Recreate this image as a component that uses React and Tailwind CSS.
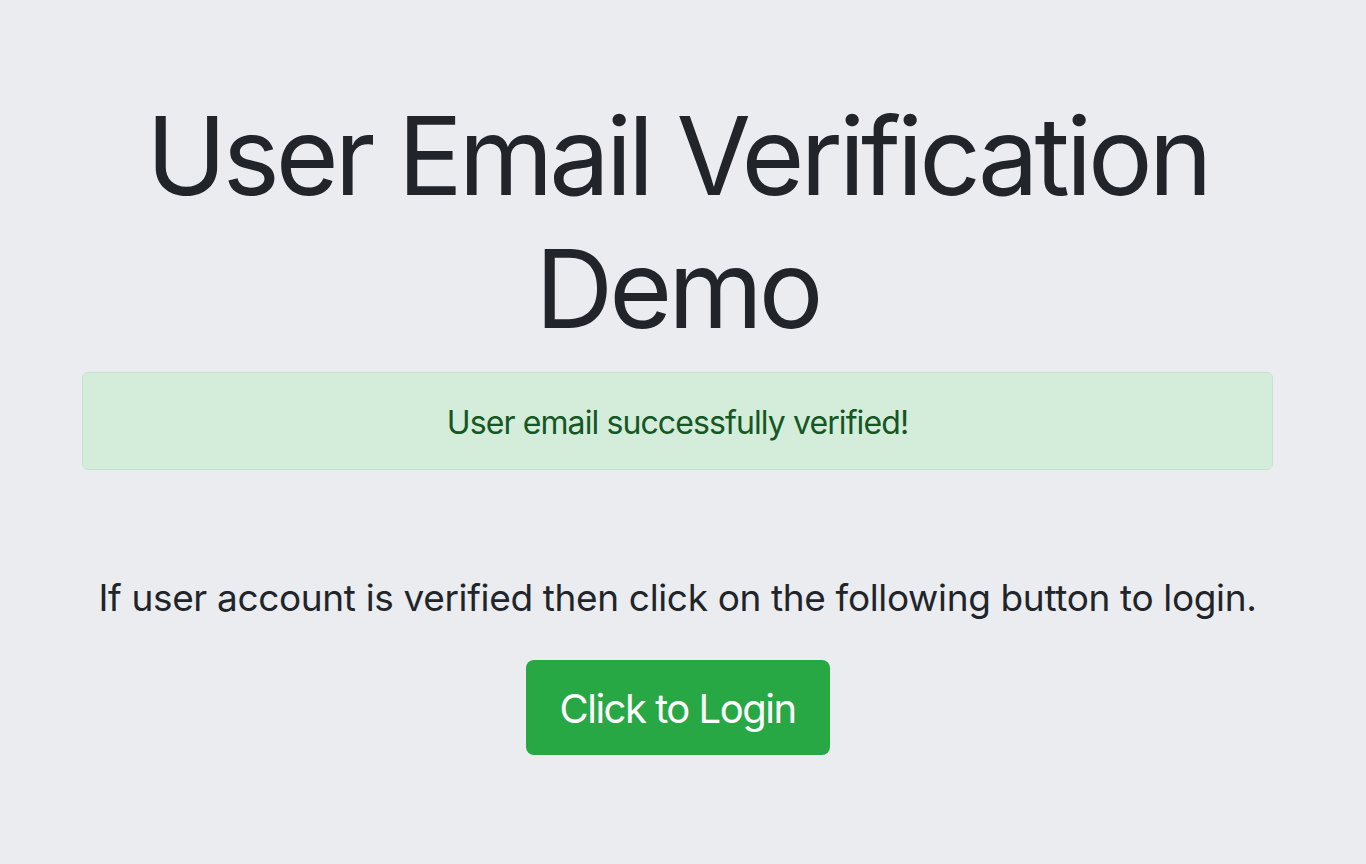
import React from 'react';

const App = () => {
    return (
        <div className="min-h-screen bg-[#eaecf0] text-[#212529]" style={{ fontFamily: 'Inter, "Noto Sans", sans-serif' }}>
            {/* Main container */}
            <div className="w-[1191px] ml-[82px] pt-[89px] text-center">
                <h1 className="text-[108px] leading-[133px] font-normal tracking-[-4px]">
                    User Email Verification Demo
                </h1>

                {/* Success alert */}
                <div className="mt-[17px] h-[98px] flex items-center justify-center bg-[#d4edda] border border-[#c3e6cb] rounded-[6px] text-[#155724] text-[32px] tracking-[-0.9px] pt-[4px]">
                    User email successfully verified!
                </div>

                <p className="mt-[106px] text-[37px] leading-[44px] tracking-[-0.35px]">
                    If user account is verified then click on the following button to login.
                </p>

                <button className="mt-[40px] inline-flex items-center justify-center w-[304px] h-[95px] rounded-[8px] bg-[#28a745] text-white text-[40px] tracking-[-1.5px] pt-[2px]">
                    Click to Login
                </button>
            </div>
        </div>
    );
};

export default App;
